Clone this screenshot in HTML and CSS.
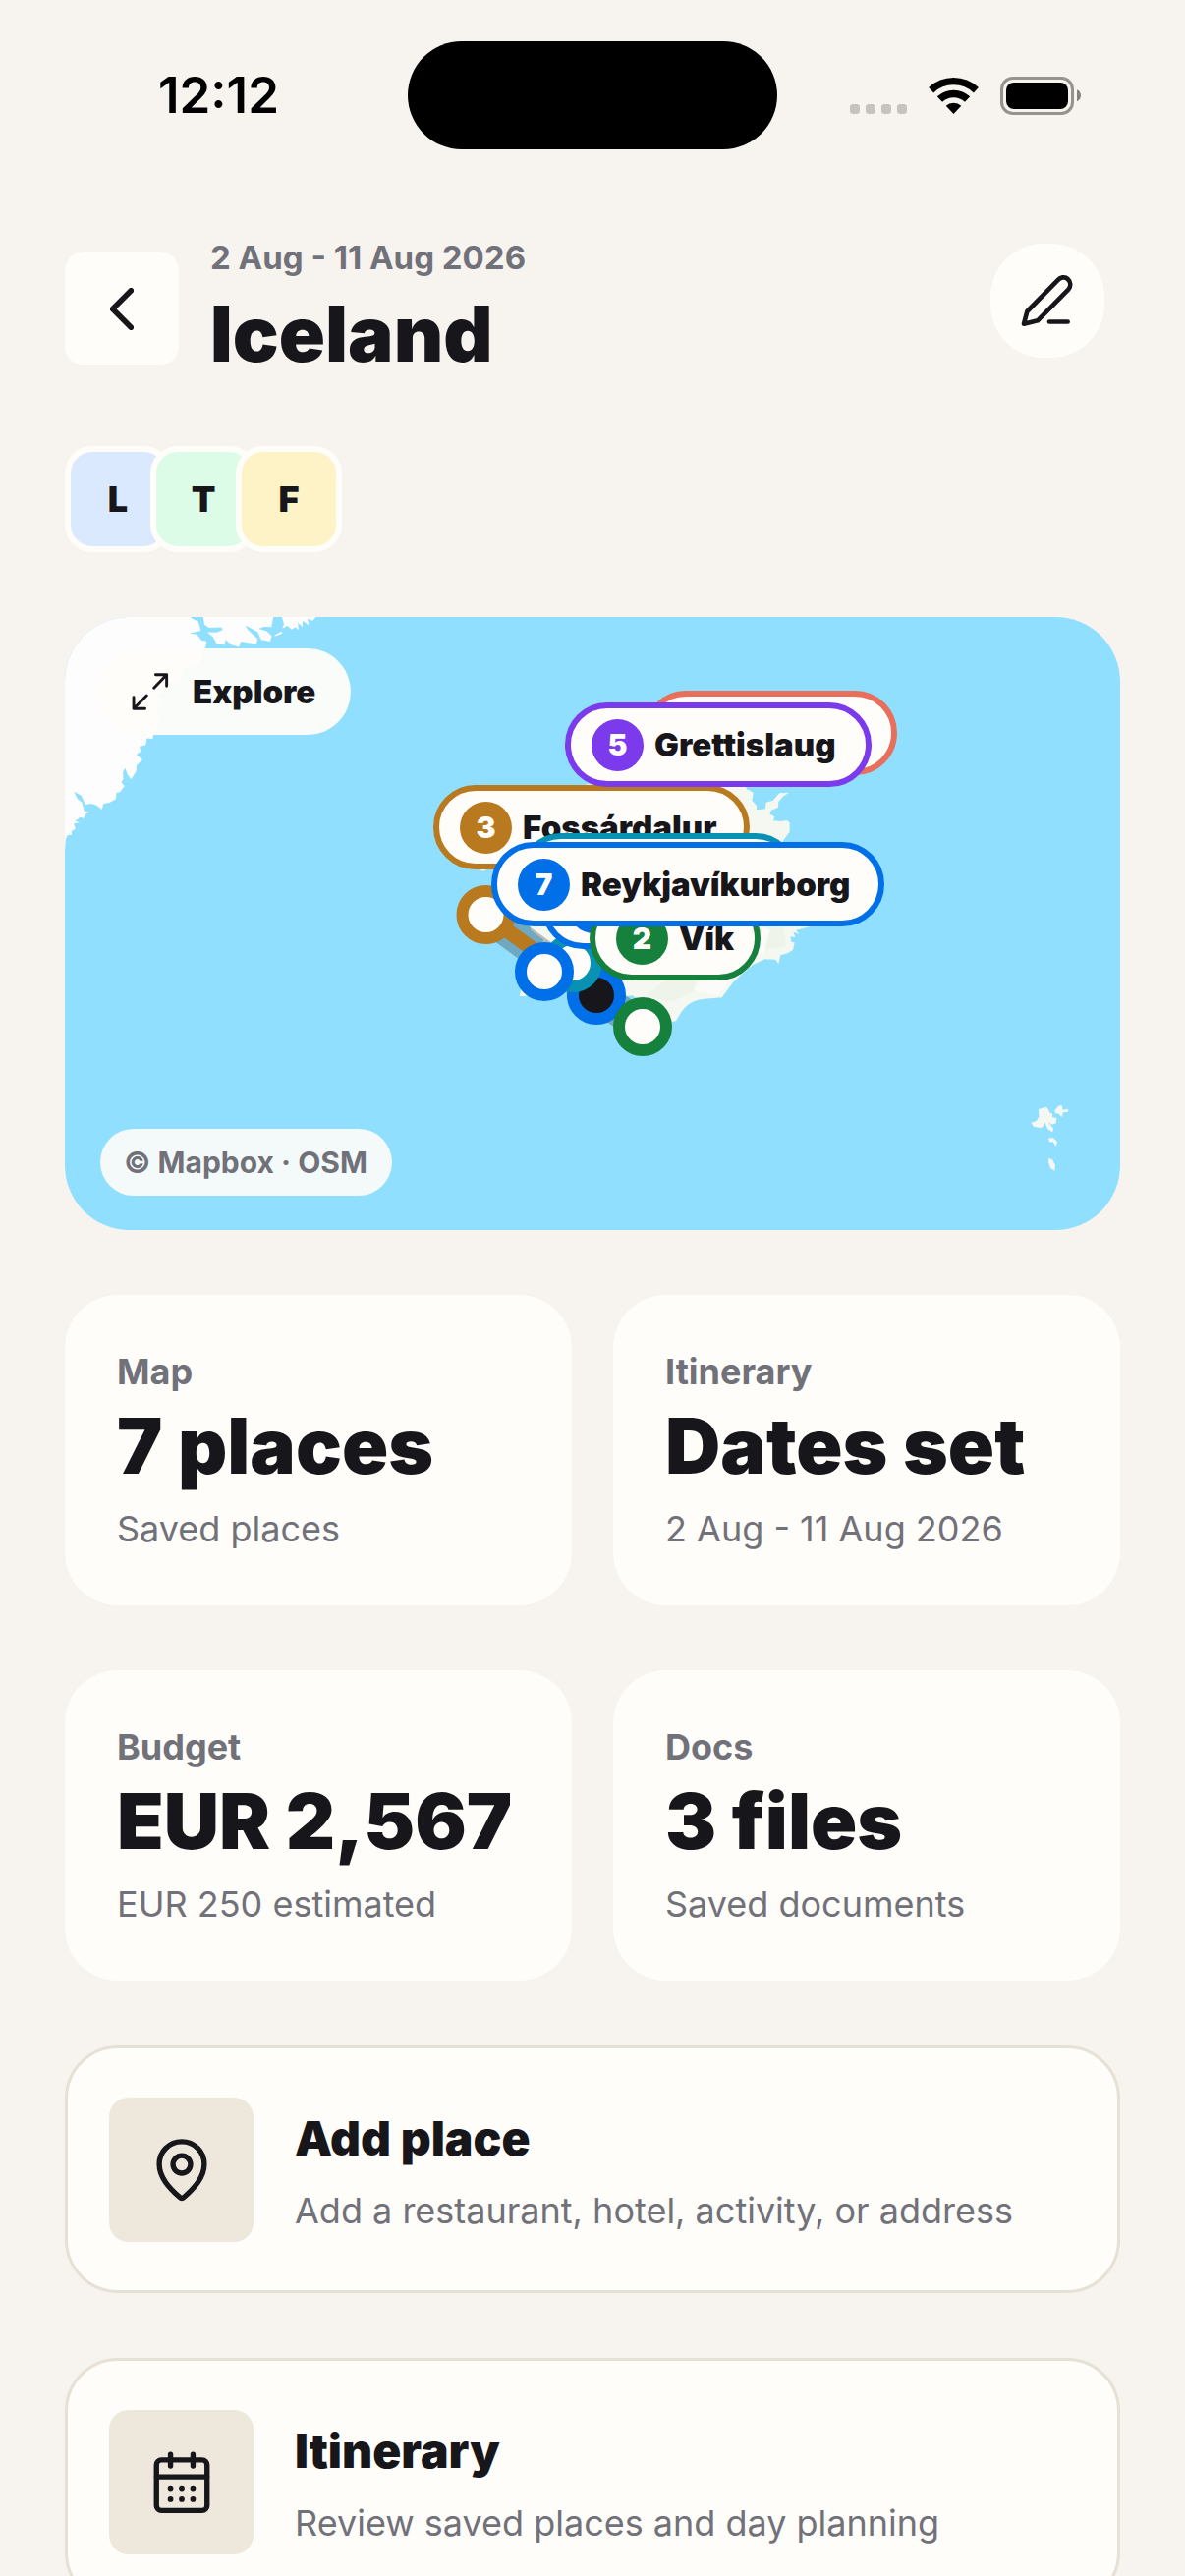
FILE: index.html
```html
<!DOCTYPE html>
<html lang="en">
<head>
<meta charset="utf-8">
<meta name="viewport" content="width=device-width, initial-scale=1">
<title>Iceland</title>
<link rel="stylesheet" href="styles.css">
</head>
<body>
<div class="screen">
  <div class="status">
    <span class="status-time">12:12</span>
    <span class="island"></span>
    <span class="status-icons">
      <svg width="58" height="39" viewBox="0 0 58 39" fill="#c7c4bf" aria-hidden="true">
        <rect x="0" y="28" width="10" height="10" rx="3"/><rect x="16" y="28" width="10" height="10" rx="3"/><rect x="32" y="28" width="10" height="10" rx="3"/><rect x="48" y="28" width="10" height="10" rx="3"/>
      </svg>
      <svg width="51" height="39" viewBox="315 84 153 117" fill="none" stroke="#000" aria-hidden="true">
        <path d="M322.9 125.2A100 100 0 0 1 460.1 125.2" stroke-width="22"/>
        <path d="M349.3 153.2A61.5 61.5 0 0 1 433.7 153.2" stroke-width="23"/>
        <path d="M391.5 198L368.2 173.2A34 34 0 0 1 414.8 173.2Z" fill="#000" stroke="none"/>
      </svg>
      <svg width="82" height="39" viewBox="534 84 246 117" aria-hidden="true">
        <rect x="538.5" y="88.5" width="216" height="108" rx="34" fill="none" stroke="#96938e" stroke-width="9"/>
        <rect x="552" y="102" width="189" height="81" rx="24"/>
        <path d="M768 124C784 130 784 154 768 160Z" fill="#85837f"/>
      </svg>
    </span>
  </div>

  <main class="content">
    <header class="trip-header">
      <div class="trip-heading">
        <button class="back" type="button" aria-label="Back">
          <svg width="24" height="43" viewBox="156 218 72 128" aria-hidden="true"><path d="M220 226L164 282L220 338" stroke-width="17"/></svg>
        </button>
        <div class="trip-titles">
          <p class="trip-dates">2 Aug - 11 Aug 2026</p>
          <h1 class="trip-name">Iceland</h1>
        </div>
      </div>
      <button class="edit" type="button" aria-label="Edit trip">
        <svg width="54" height="54" viewBox="597 685 162 162" aria-hidden="true"><path d="M606 837L616 799L709 704C717 695 731 691 740 700C750 709 750 722 742 732L648 827Z" stroke-width="14"/><path d="M684 830.500H740" stroke-width="14"/></svg>
      </button>
    </header>

    <ul class="members" aria-label="Travellers">
      <li class="member member-blue">L</li>
      <li class="member member-green">T</li>
      <li class="member member-yellow">F</li>
    </ul>

    <section class="map" aria-label="Trip map">
      <svg class="map-base" viewBox="0 0 1074 624" preserveAspectRatio="xMidYMid slice" aria-hidden="true">
        <g transform="translate(-6 -8) scale(0.3444)" fill="#fdfdfd">
          <path d="M10 10H385L392 27L412 37L419 64L386 72L408 75L421 92L436 95L433 114L422 118L421 163L385 163L366 183L365 199L345 212L329 213L328 223L312 227L310 246L290 252L300 270L290 279L289 300L299 326L286 347L294 350L280 367L277 383L260 382L256 402L238 406L242 420L229 430L247 446L230 461L228 480L213 503L202 488L196 470L189 482L190 503L184 512L194 523L179 542H170L168 562L150 571L131 576L127 592L110 579L95 575L78 578L66 551L44 539L55 561L68 571L75 598H92L80 604L73 619L64 614L48 626L60 631L44 634L49 650L37 656L38 667L26 668L20 680L17 718H10Z"/>
          <path d="M424 10L430 46L443 55L480 54L484 62L466 69L438 68L455 82L467 103L490 105L492 91L511 106L532 112L538 96L583 103L587 88L558 61L551 48L566 56L588 68L597 90L624 96L629 80L614 65L590 58L605 52L628 53L636 10Z"/>
          <path d="M655 10L665 44L660 57L675 49L688 60L699 53L708 62L706 40L720 52V34L738 48L735 28L750 34L770 10ZM636 78L658 66L660 72L640 80Z"/>
        </g>
        <g transform="translate(364 52) scale(0.33333)" fill="#f5f8f0">
          <path d="M500 355H985L990 370L1010 380L1006 404L1020 420V433L1047 430L1049 410L1070 404L1090 382L1119 380L1100 393L1087 408L1086 425L1065 434L1060 446L1075 454L1071 466L1095 468L1112 465L1121 472V500L1100 528V780L1187 788L1160 796L1140 800L1150 812L1132 806L1138 822L1123 820L1126 836L1136 838L1131 860L1116 870L1093 877L1087 903L1078 890L1045 889L1010 905L980 930L950 958L914 1006L860 1010C820 1013 795 1035 775 1076L755 1084L640 1000L560 1010L430 990L370 1000L296 1002L300 985L330 900L370 830L330 800V610L400 560Z"/>
          <path d="M165 612H205L185 620Z"/>
          <path d="M680 1000L760 940L840 940L825 990L760 1020ZM1010 780H1100L1110 850L1050 860Z" fill="#eff4ea"/>
          <path d="M830 985L860 930L960 930L900 1000ZM1040 790L1060 800L1040 880L1020 870Z" fill="#fbfcfa"/>
        </g>
        <g transform="translate(734 152) scale(0.33333)" fill="#f5f8f2">
          <path d="M748 1089L765 1082L772 1070L771 1047L794 1040L801 1048L804 1057L814 1062L812 1071L826 1074L824 1090L812 1094L801 1086L817 1108L813 1117L799 1108L790 1088L784 1102L774 1104L757 1100Z"/>
          <path d="M820 1051L833 1036L842 1036L845 1049L862 1046L860 1056L847 1056L841 1071L833 1061L822 1059ZM801 1136L815 1134L828 1146L824 1161L815 1147L804 1147ZM802 1196L813 1201L822 1218L820 1235L808 1228L801 1210Z"/>
        </g>
        <g fill="none" stroke-linejoin="round">
          <path d="M428 303L541 385L588 417" stroke="#17161b" stroke-opacity=".27" stroke-width="33"/>
          <path d="M428 303L541 385" stroke="#b8791f" stroke-width="15"/>
        </g>
        <g fill="#fffdf9" stroke-width="12">
          <circle cx="428.500" cy="303" r="24" stroke="#b8791f"/>
          <circle cx="541" cy="385" r="24" fill="#17161b" stroke="#006fe8"/>
          <circle cx="517" cy="352" r="24" stroke="#0891b2"/>
          <circle cx="488" cy="361" r="24" stroke="#006fe8"/>
          <circle cx="588" cy="417" r="24" stroke="#16813d"/>
        </g>
      </svg>

      <ol class="pins">
        <li class="pin pin-6"></li>
        <li class="pin pin-3"><span class="pin-number">3</span>Fossárdalur</li>
        <li class="pin pin-5"><span class="pin-number">5</span>Grettislaug</li>
        <li class="pin pin-4"></li>
        <li class="pin pin-1"><span class="pin-number"></span></li>
        <li class="pin pin-2"><span class="pin-number">2</span>Vík</li>
        <li class="pin pin-7"><span class="pin-number">7</span>Reykjavíkurborg</li>
      </ol>

      <button class="explore" type="button">
        <svg width="38" height="38" viewBox="213 194 112 112" aria-hidden="true"><path d="M280 239L318 199M285 199H318V233M258 262L219 301M219 267V301H253" stroke-width="8.500"/></svg>
        Explore
      </button>
      <a class="attribution" href="#attribution">© Mapbox · OSM</a>
    </section>

    <section class="stats" aria-label="Overview">
      <article class="stat"><h2 class="stat-label">Map</h2><p class="stat-value">7 places</p><p class="stat-note">Saved places</p></article>
      <article class="stat"><h2 class="stat-label">Itinerary</h2><p class="stat-value">Dates set</p><p class="stat-note">2 Aug - 11 Aug 2026</p></article>
      <article class="stat"><h2 class="stat-label">Budget</h2><p class="stat-value">EUR 2,567</p><p class="stat-note">EUR 250 estimated</p></article>
      <article class="stat"><h2 class="stat-label">Docs</h2><p class="stat-value">3 files</p><p class="stat-note">Saved documents</p></article>
    </section>

    <button class="action" type="button">
      <span class="action-icon">
        <svg width="64" height="64" viewBox="259 325 179 179" stroke-width="15" aria-hidden="true"><path d="M348.500 333C313 333 284.500 361 284.500 397C284.500 435 313 465 342 491Q348.500 497 355 491C384 465 412.500 435 412.500 397C412.500 361 384 333 348.500 333Z"/><circle cx="348.500" cy="398" r="25"/></svg>
      </span>
      <span class="action-text"><span class="action-title">Add place</span><span class="action-note">Add a restaurant, hotel, activity, or address</span></span>
    </button>
    <button class="action" type="button">
      <span class="action-icon">
        <svg width="64" height="64" viewBox="259 1212 179 179" stroke-width="15" aria-hidden="true"><rect x="276.500" y="1237" width="144" height="144" rx="14"/><path d="M316.500 1221V1254M380.500 1221V1254M277 1285H420"/><g fill="#17161b" stroke="none"><circle cx="316.500" cy="1317" r="8"/><circle cx="348.500" cy="1317" r="8"/><circle cx="380.500" cy="1317" r="8"/><circle cx="316.500" cy="1349" r="8"/><circle cx="348.500" cy="1349" r="8"/><circle cx="380.500" cy="1349" r="8"/></g></svg>
      </span>
      <span class="action-text"><span class="action-title">Itinerary</span><span class="action-note">Review saved places and day planning</span></span>
    </button>
  </main>
</div>
</body>
</html>
```
FILE: styles.css
```css
:root {
  --bg: #f7f3ee;
  --card: #fffdf9;
  --ink: #17161b;
  --muted: #71717a;
  --tile: #eee7dc;
  --line: #e7e0d6;
}

* { box-sizing: border-box; }

body {
  margin: 0;
  background: var(--bg);
  color: var(--ink);
  font-family: Inter, "Liberation Sans", sans-serif;
  font-optical-sizing: none;
}

h1, h2, p, ul, ol { margin: 0; padding: 0; }
ul, ol { list-style: none; }
svg { display: block; flex: none; }

button {
  margin: 0;
  border: 0;
  padding: 0;
  color: inherit;
  font: inherit;
  text-align: left;
  cursor: pointer;
}

button svg {
  fill: none;
  stroke: var(--ink);
  stroke-linecap: round;
  stroke-linejoin: round;
}

.screen {
  height: 100vh;
  overflow-y: auto;
  scrollbar-width: none;
}

/* Status bar */
.status {
  display: grid;
  grid-template-columns: 1fr 376px 1fr;
  align-items: center;
  padding-top: 42px;
}

.status-time {
  padding-left: 161px;
  color: #000;
  font-size: 51px;
  font-weight: 600;
  line-height: 60px;
}

.island {
  height: 110px;
  border-radius: 55px;
  background: #000;
}

.status-icons {
  display: flex;
  gap: 22px;
  padding-left: 74px;
}

.content {
  display: flex;
  flex-direction: column;
  gap: 66px;
  padding: 88px 66px 66px;
}

/* Trip header */
.trip-header {
  display: flex;
  justify-content: space-between;
  align-items: flex-start;
  padding-right: 16px;
}

.trip-heading {
  display: flex;
  align-items: center;
  gap: 32px;
}

.back, .edit {
  display: grid;
  place-items: center;
  flex: none;
  width: 116px;
  height: 116px;
  background: var(--card);
}

.back { border-radius: 20px; }
.edit { margin-top: 8px; border-radius: 54px; }

.trip-titles { padding-bottom: 4px; }

.trip-dates {
  color: var(--muted);
  font-size: 33px;
  font-weight: 700;
  line-height: 44px;
}

.trip-name {
  margin-top: 12px;
  font-size: 78px;
  font-weight: 900;
  line-height: 88px;
}

/* Members */
.members { display: flex; }

.member {
  display: grid;
  place-items: center;
  width: 108px;
  height: 108px;
  border: 6px solid var(--card);
  border-radius: 28px;
  font-size: 36px;
  font-weight: 900;
}

.member + .member { margin-left: -21px; }
.member-blue { background: #dbe9ff; }
.member-green { background: #dcfce7; }
.member-yellow { background: #fef2c7; }

/* Map */
.map {
  position: relative;
  height: 624px;
  border-radius: 66px;
  overflow: hidden;
  background: #90dfff;
}

.map-base { width: 100%; height: 100%; }

.pin {
  position: absolute;
  display: flex;
  align-items: center;
  gap: 11px;
  height: 86px;
  border: 6px solid var(--pin);
  border-radius: 43px;
  padding-left: 21px;
  background: var(--card);
  font-size: 33px;
  font-weight: 900;
  white-space: nowrap;
}

.pin-number {
  display: grid;
  place-items: center;
  width: 53px;
  height: 53px;
  border-radius: 50%;
  background: var(--pin);
  color: #fffdf9;
  font-size: 30px;
}

.pin-6 { --pin: #e86f5c; left: calc(50% + 52px); top: 75px; width: 258px; }
.pin-3 { --pin: #b8791f; left: calc(50% - 162px); top: 171px; width: 322px; }
.pin-5 { --pin: #7c3aed; left: calc(50% - 28px); top: 87px; width: 312px; }
.pin-4 { --pin: #0891b2; left: calc(50% - 75px); top: 220px; width: 284px; }
.pin-1 { --pin: #006fe8; left: calc(50% - 52px); top: 252px; width: 200px; }
.pin-2 { --pin: #16813d; left: calc(50% - 3px); top: 284px; width: 174px; }
.pin-7 { --pin: #006fe8; left: calc(50% - 103px); top: 229px; width: 400px; }

.explore {
  position: absolute;
  top: 32px;
  left: 33px;
  display: flex;
  align-items: center;
  gap: 24px;
  height: 88px;
  border-radius: 44px;
  padding: 0 36px 0 35px;
  background: rgb(255 253 249 / .95);
  font-size: 33px;
  font-weight: 900;
}

.attribution {
  position: absolute;
  bottom: 35px;
  left: 36px;
  border-radius: 34px;
  padding: 0 25px 0 24px;
  background: rgb(255 253 249 / .9);
  color: var(--muted);
  font-size: 30px;
  font-weight: 700;
  line-height: 68px;
  text-decoration: none;
}

/* Overview cards */
.stats {
  display: grid;
  grid-template-columns: 1fr 1fr;
  gap: 66px 42px;
}

.stat {
  border-radius: 54px;
  padding: 54px 53px;
  background: var(--card);
}

.stat-label {
  color: var(--muted);
  font-size: 36px;
  font-weight: 700;
  line-height: 48px;
}

.stat-value {
  margin: 8px 0 16px;
  font-size: 78px;
  font-weight: 900;
  line-height: 88px;
  white-space: nowrap;
}

.stat-note, .action-note {
  color: var(--muted);
  font-size: 36px;
  font-weight: 400;
  line-height: 48px;
}

/* Actions */
.action {
  display: flex;
  align-items: center;
  gap: 42px;
  border: 3px solid var(--line);
  border-radius: 54px;
  padding: 50px 42px 49px;
  background: var(--card);
}

.action-icon {
  display: grid;
  place-items: center;
  flex: none;
  width: 147px;
  height: 147px;
  border-radius: 20px;
  background: var(--tile);
}

.action-text {
  display: flex;
  flex-direction: column;
  gap: 16px;
}

.action-title {
  font-size: 48px;
  font-weight: 900;
  line-height: 66px;
}
```
